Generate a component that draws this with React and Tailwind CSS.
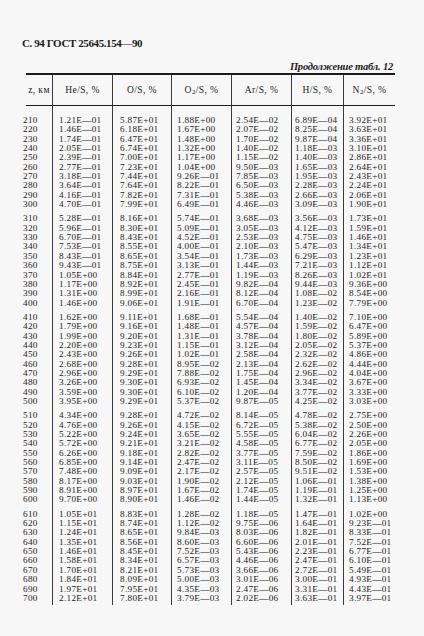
import React from "react";

const raw = {
  he: "1.21-01 1.46-01 1.74-01 2.05-01 2.39-01 2.77-01 3.18-01 3.64-01 4.16-01 4.70-01 5.28-01 5.96-01 6.70-01 7.53-01 8.43-01 9.43-01 1.05+00 1.17+00 1.31+00 1.46+00 1.62+00 1.79+00 1.99+00 2.20+00 2.43+00 2.68+00 2.96+00 3.26+00 3.59+00 3.95+00 4.34+00 4.76+00 5.22+00 5.72+00 6.26+00 6.85+00 7.48+00 8.17+00 8.91+00 9.70+00 1.05+01 1.15+01 1.24+01 1.35+01 1.46+01 1.58+01 1.70+01 1.84+01 1.97+01 2.12+01",
  o: "5.87+01 6.18+01 6.47+01 6.74+01 7.00+01 7.23+01 7.44+01 7.64+01 7.82+01 7.99+01 8.16+01 8.30+01 8.43+01 8.55+01 8.65+01 8.75+01 8.84+01 8.92+01 8.99+01 9.06+01 9.11+01 9.16+01 9.20+01 9.23+01 9.26+01 9.28+01 9.29+01 9.30+01 9.30+01 9.29+01 9.28+01 9.26+01 9.24+01 9.21+01 9.18+01 9.14+01 9.09+01 9.03+01 8.97+01 8.90+01 8.83+01 8.74+01 8.65+01 8.56+01 8.45+01 8.34+01 8.21+01 8.09+01 7.95+01 7.80+01",
  o2: "1.88+00 1.67+00 1.48+00 1.32+00 1.17+00 1.04+00 9.26-01 8.22-01 7.31-01 6.49-01 5.74-01 5.09-01 4.52-01 4.00-01 3.54-01 3.13-01 2.77-01 2.45-01 2.16-01 1.91-01 1.68-01 1.48-01 1.31-01 1.15-01 1.02-01 8.95-02 7.88-02 6.93-02 6.10-02 5.37-02 4.72-02 4.15-02 3.65-02 3.21-02 2.82-02 2.47-02 2.17-02 1.90-02 1.67-02 1.46-02 1.28-02 1.12-02 9.84-03 8.60-03 7.52-03 6.57-03 5.73-03 5.00-03 4.35-03 3.79-03",
  ar: "2.54-02 2.07-02 1.70-02 1.40-02 1.15-02 9.50-03 7.85-03 6.50-03 5.38-03 4.46-03 3.68-03 3.05-03 2.53-03 2.10-03 1.73-03 1.44-03 1.19-03 9.82-04 8.12-04 6.70-04 5.54-04 4.57-04 3.78-04 3.12-04 2.58-04 2.13-04 1.75-04 1.45-04 1.20-04 9.87-05 8.14-05 6.72-05 5.55-05 4.58-05 3.77-05 3.11-05 2.57-05 2.12-05 1.74-05 1.44-05 1.18-05 9.75-06 8.03-06 6.60-06 5.43-06 4.46-06 3.66-06 3.01-06 2.47-06 2.02-06",
  h: "6.89-04 8.25-04 9.87-04 1.18-03 1.40-03 1.65-03 1.95-03 2.28-03 2.66-03 3.09-03 3.56-03 4.12-03 4.75-03 5.47-03 6.29-03 7.21-03 8.26-03 9.44-03 1.08-02 1.23-02 1.40-02 1.59-02 1.80-02 2.05-02 2.32-02 2.62-02 2.96-02 3.34-02 3.77-02 4.25-02 4.78-02 5.38-02 6.04-02 6.77-02 7.59-02 8.50-02 9.51-02 1.06-01 1.19-01 1.32-01 1.47-01 1.64-01 1.82-01 2.01-01 2.23-01 2.47-01 2.72-01 3.00-01 3.31-01 3.63-01",
  n2: "3.92+01 3.63+01 3.36+01 3.10+01 2.86+01 2.64+01 2.43+01 2.24+01 2.06+01 1.90+01 1.73+01 1.59+01 1.46+01 1.34+01 1.23+01 1.12+01 1.02+01 9.36+00 8.54+00 7.79+00 7.10+00 6.47+00 5.89+00 5.37+00 4.86+00 4.44+00 4.04+00 3.67+00 3.33+00 3.03+00 2.75+00 2.50+00 2.26+00 2.05+00 1.86+00 1.69+00 1.53+00 1.38+00 1.25+00 1.13+00 1.02+00 9.23-01 8.33-01 7.52-01 6.77-01 6.10-01 5.49-01 4.93-01 4.43-01 3.97-01",
};

const fmt = (s) => s.replace("-", "E—").replace("+", "E+");
const split = (s) => s.split(" ").map(fmt);
const zs = Array.from({ length: 50 }, (_, i) => String(210 + i * 10));

const cols = [
  { key: "z", vals: zs, cls: "pl-[1px]" },
  { key: "he", vals: split(raw.he), cls: "pl-[6px] border-l border-[#3a3a3a]" },
  { key: "o", vals: split(raw.o), cls: "pl-[7px] border-l border-[#3a3a3a]" },
  { key: "o2", vals: split(raw.o2), cls: "pl-[5px] border-l border-[#3a3a3a]" },
  { key: "ar", vals: split(raw.ar), cls: "pl-[4px] border-l border-[#3a3a3a]" },
  { key: "h", vals: split(raw.h), cls: "pl-[3px] border-l border-[#3a3a3a]" },
  { key: "n2", vals: split(raw.n2), cls: "pl-[5px] border-l border-[#3a3a3a]" },
];

function Column({ col }) {
  const groups = [0, 1, 2, 3, 4].map((g) => col.vals.slice(g * 10, g * 10 + 10));
  return (
    <div className={`flex flex-col gap-[5px] pt-[10px] pb-[2px] ${col.cls}`}>
      {groups.map((grp, gi) => (
        <div key={gi} className="flex flex-col">
          {grp.map((v, ri) => (
            <div
              key={ri}
              className="h-[9.35px] leading-[9.35px] text-[9.2px] tracking-[0.3px] whitespace-nowrap"
            >
              {v}
            </div>
          ))}
        </div>
      ))}
    </div>
  );
}

export default function App() {
  return (
    <div className="w-[424px] h-[636px] bg-[#f7f7f7] text-[#1c1c1c] font-['Liberation_Serif',serif] overflow-hidden">
      <div className="h-[36px]" />
      <div className="h-[14px] leading-[14px] pl-[22px] text-[11px] font-bold tracking-[-0.4px]">
        С. 94 ГОСТ 25645.154—90
      </div>
      <div className="h-[10px]" />
      <div className="h-[13px] leading-[13px] text-right pr-[31px] text-[10.5px] italic font-bold tracking-[-0.2px]">
        Продолжение табл. 12
      </div>
      <div className="ml-[22px] w-[373px]">
        <div className="ml-[4px] h-[2px] bg-[#1c1c1c]" />
        <div className="grid grid-cols-[30px_60px_59px_60px_60px_52px_52px] h-[30px] text-[9.5px] tracking-[0.4px] items-stretch">
          <div className="flex items-center justify-center pl-[4px]">z, км</div>
          <div className="flex items-center justify-center border-l border-[#3a3a3a]">He/S, %</div>
          <div className="flex items-center justify-center border-l border-[#3a3a3a]">O/S, %</div>
          <div className="flex items-center justify-center border-l border-[#3a3a3a]">
            O<sub className="text-[7px]">2</sub>/S, %
          </div>
          <div className="flex items-center justify-center border-l border-[#3a3a3a]">Ar/S, %</div>
          <div className="flex items-center justify-center border-l border-[#3a3a3a]">H/S, %</div>
          <div className="flex items-center justify-center border-l border-[#3a3a3a]">
            N<sub className="text-[7px]">2</sub>/S, %
          </div>
        </div>
        <div className="ml-[4px] h-[1px] bg-[#1c1c1c]" />
        <div className="grid grid-cols-[30px_60px_59px_60px_60px_52px_52px]">
          {cols.map((c) => (
            <Column key={c.key} col={c} />
          ))}
        </div>
      </div>
    </div>
  );
}
